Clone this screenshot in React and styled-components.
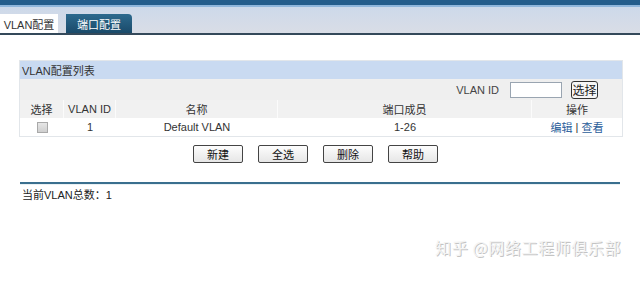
import styled, { createGlobalStyle } from "styled-components";

const Global = createGlobalStyle`
  body {
    margin: 0;
    background: #fff;
    font-family: "Liberation Sans", "Noto Sans CJK SC", sans-serif;
    font-size: 11px;
    color: #222;
  }
`;

const Page = styled.div`
  width: 640px;
  height: 282px;
  position: relative;
  overflow: hidden;
`;

const TopBar = styled.div`
  height: 5px;
  background: #245d8c;
  border-bottom: 2px solid #8fb6dc;
`;

const TabStrip = styled.div`
  height: 26px;
  background: linear-gradient(#cdd9ea, #d9dde6);
  border-bottom: 2px solid #34495a;
  display: flex;
  align-items: flex-end;
  gap: 8px;
`;

const Tab = styled.div`
  height: 19px;
  width: ${(p) => p.w}px;
  display: flex;
  align-items: center;
  justify-content: center;
  font-size: 11px;
  background: ${(p) => (p.active ? "#fff" : "linear-gradient(#2d6a8e, #1a4a6a)")};
  color: ${(p) => (p.active ? "#333" : "#fff")};
  border-top-right-radius: ${(p) => (p.active ? 0 : 4)}px;
`;

const Panel = styled.div`
  margin: 25px 17px 0 19px;
  border: 1px solid #e2e6ea;
`;

const PanelTitle = styled.div`
  height: 18px;
  background: #c9daf1;
  display: flex;
  align-items: center;
  padding-left: 2px;
  color: #333;
`;

const FilterRow = styled.div`
  height: 21px;
  background: #efefef;
  display: flex;
  align-items: center;
  justify-content: flex-end;
  padding-right: 24px;
`;

const FilterLabel = styled.span`
  color: #444;
  margin-right: 11px;
`;

const Input = styled.div`
  width: 50px;
  height: 14px;
  border: 1px solid #9aa5b1;
  background: #fff;
  margin-right: 9px;
`;

const SmallButton = styled.div`
  width: 25px;
  height: 16px;
  border: 1px solid #333;
  border-radius: 3px;
  background: #f6f6f6;
  display: flex;
  align-items: center;
  justify-content: center;
  font-size: 12px;
  white-space: nowrap;
`;

const Grid = styled.div`
  display: grid;
  grid-template-columns: 44px 52px 162px 254px 1fr;
`;

const HeadCell = styled.div`
  height: 18px;
  background: #f1f1f1;
  display: flex;
  align-items: center;
  justify-content: center;
  color: #333;
  font-size: 11px;
  border-right: ${(p) => (p.last ? "none" : "1px solid #fbfbfb")};
`;

const Cell = styled.div`
  height: 18px;
  display: flex;
  align-items: center;
  justify-content: center;
  background: #fff;
  color: #333;
`;

const Check = styled.div`
  width: 9px;
  height: 9px;
  border: 1px solid #a9a9a9;
  background: linear-gradient(#e6e6e6, #cfcfcf);
`;

const Link = styled.span`
  color: #2a5d9a;
`;

const Buttons = styled.div`
  display: flex;
  gap: 15px;
  margin: 8px 0 0 193px;
`;

const Button = styled.div`
  width: 48px;
  height: 16px;
  border: 1px solid #444;
  border-radius: 2px;
  background: linear-gradient(#fdfdfd, #e6e6e6);
  display: flex;
  align-items: center;
  justify-content: center;
  font-size: 11px;
  color: #111;
`;

const Rule = styled.div`
  margin: 19px 20px 0 20px;
  height: 2px;
  background: #3a6f8e;
  border-bottom: 1px solid #e9f1f4;
`;

const Summary = styled.div`
  margin: 1px 0 0 22px;
  color: #222;
`;

const Watermark = styled.div`
  position: absolute;
  right: 19px;
  top: 235px;
  font-family: "Noto Sans CJK SC", sans-serif;
  font-size: 16px;
  color: #f4f4f4;
  text-shadow: 1px 1px 0 #c4c4c4, -1px -1px 0 #ffffff;
  letter-spacing: 0.6px;
`;

export default function App() {
  return (
    <Page>
      <Global />
      <TopBar />
      <TabStrip>
        <Tab active w={58}>VLAN配置</Tab>
        <Tab w={66}>端口配置</Tab>
      </TabStrip>
      <Panel>
        <PanelTitle>VLAN配置列表</PanelTitle>
        <FilterRow>
          <FilterLabel>VLAN ID</FilterLabel>
          <Input />
          <SmallButton>选择</SmallButton>
        </FilterRow>
        <Grid>
          <HeadCell>选择</HeadCell>
          <HeadCell>VLAN ID</HeadCell>
          <HeadCell>名称</HeadCell>
          <HeadCell>端口成员</HeadCell>
          <HeadCell last>操作</HeadCell>
          <Cell>
            <Check />
          </Cell>
          <Cell>1</Cell>
          <Cell>Default VLAN</Cell>
          <Cell>1-26</Cell>
          <Cell>
            <Link>编辑</Link>&nbsp;|&nbsp;<Link>查看</Link>
          </Cell>
        </Grid>
      </Panel>
      <Buttons>
        <Button>新建</Button>
        <Button>全选</Button>
        <Button>删除</Button>
        <Button>帮助</Button>
      </Buttons>
      <Rule />
      <Summary>当前VLAN总数：1</Summary>
      <Watermark>知乎 @网络工程师俱乐部</Watermark>
    </Page>
  );
}
